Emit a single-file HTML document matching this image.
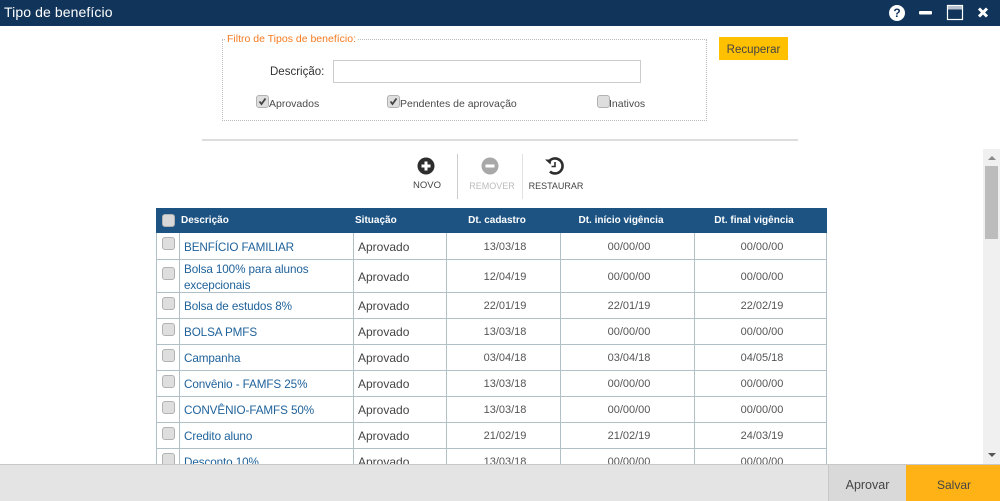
<!DOCTYPE html>
<html lang="pt"><head><meta charset="utf-8"><title>Tipo de benefício</title>
<style>
html,body{margin:0;padding:0}
body{width:1000px;height:501px;overflow:hidden;background:#fff;position:relative;font-family:"Liberation Sans",sans-serif;color:#333}
.a{position:absolute;white-space:nowrap;line-height:16px}
.b{position:absolute}
.cb{position:absolute;width:11px;height:11px;background:#dedede;border:1px solid #b2b2b2;border-radius:3px}
.cb svg{position:absolute;left:1px;top:1px}
.l{position:absolute;background:#b0c0c6}
.d{font-size:11.7px;letter-spacing:-.1px;color:#20639b;margin-top:1px}
.s{font-size:12px;color:#444}
.c{font-size:11px;color:#555;text-align:center;width:100px}
.h{font-size:10px;color:#fff;font-weight:bold}
.f{font-size:10.5px;color:#4a4a4a}
</style></head><body>
<div class="b" style="left:0;top:0;width:1000px;height:26px;background:#11355a"></div>
<div class="a" style="left:4px;top:4px;font-size:14px;color:#fff;letter-spacing:.1px">Tipo de benefício</div>
<svg class="b" style="left:888px;top:4px" width="104" height="18" viewBox="0 0 104 18">
<circle cx="9" cy="9" r="8" fill="#fff"/><text x="9" y="13" font-size="12" font-weight="bold" text-anchor="middle" fill="#11355a" font-family="Liberation Sans">?</text>
<rect x="31" y="7" width="13" height="3.500" rx="1" fill="#fff"/>
<rect x="59.500" y="1.500" width="15" height="14" fill="none" stroke="#fff" stroke-width="1.200"/><rect x="60" y="2" width="14" height="3.500" fill="#b9c4d0"/>
<path d="M91 4.500l8 8M99 4.500l-8 8" stroke="#fff" stroke-width="3"/>
</svg>

<div class="b" style="left:222px;top:39px;width:483px;height:80px;border:1px dotted #bbb"></div>
<div class="a" style="left:225px;top:31px;font-size:10.5px;color:#f47b20;background:#fff;padding:0 2px;">Filtro de Tipos de benefício:</div>
<div class="a" style="left:270px;top:64px;font-size:11.500px;color:#333">Descrição:</div>
<div class="b" style="left:333px;top:60px;width:306px;height:21px;border:1px solid #ccc"></div>
<div class="cb" style="left:256px;top:95px"><svg width="9" height="9" viewBox="0 0 9 9"><path d="M1.500 4.500l2 2.500 4-5.500" fill="none" stroke="#444" stroke-width="1.800"/></svg></div>
<div class="a f" style="left:269px;top:96px">Aprovados</div>
<div class="cb" style="left:387px;top:95px"><svg width="9" height="9" viewBox="0 0 9 9"><path d="M1.500 4.500l2 2.500 4-5.500" fill="none" stroke="#444" stroke-width="1.800"/></svg></div>
<div class="a f" style="left:400px;top:96px">Pendentes de aprovação</div>
<div class="cb" style="left:597px;top:95px"></div>
<div class="a f" style="left:609px;top:96px">Inativos</div>
<div class="b" style="left:719px;top:37px;width:69px;height:23px;background:#ffc000"></div>
<div class="a" style="left:719px;top:42px;width:69px;text-align:center;font-size:11.500px;color:#444">Recuperar</div>
<div class="b" style="left:202px;top:139px;width:596px;height:2px;background:#ddd"></div>

<svg class="b" style="left:416px;top:156px" width="20" height="20" viewBox="0 0 20 20"><circle cx="10" cy="10" r="8.500" fill="#2d2d2d"/><path d="M10 5.500v9M5.500 10h9" stroke="#fff" stroke-width="3"/></svg>
<svg class="b" style="left:480px;top:156px" width="20" height="20" viewBox="0 0 20 20"><circle cx="10" cy="10" r="8.500" fill="#a8a8a8"/><path d="M5.500 10h9" stroke="#fff" stroke-width="3"/></svg>
<svg class="b" style="left:544px;top:156px" width="22" height="20" viewBox="0 0 22 20"><path d="M5 5.500A7.500 7.500 0 1 1 6 15.500" fill="none" stroke="#2d2d2d" stroke-width="2.600"/><path d="M1 3.500l6.500 0-1 5z" fill="#2d2d2d"/><path d="M11 6v4.500H7.500" fill="none" stroke="#2d2d2d" stroke-width="1.600"/></svg>
<div class="a" style="left:397px;top:178px;width:60px;text-align:center;font-size:9.500px;color:#444">NOVO</div>
<div class="a" style="left:462px;top:178px;width:60px;text-align:center;font-size:9px;color:#bbb">REMOVER</div>
<div class="a" style="left:526px;top:178px;width:60px;text-align:center;font-size:9px;color:#444">RESTAURAR</div>
<div class="b" style="left:457px;top:154px;width:1px;height:45px;background:#ccc"></div>
<div class="b" style="left:522px;top:154px;width:1px;height:45px;background:#e2e2e2"></div>

<div class="b" style="left:156px;top:208px;width:671px;height:25px;background:#1c5383"></div>
<div class="cb" style="left:162px;top:214px;background:#d8d8d8"></div>
<div class="a h" style="left:181px;top:213px">Descrição</div>
<div class="a h" style="left:355px;top:213px">Situação</div>
<div class="a h" style="left:447px;top:213px;width:100px;text-align:center">Dt. cadastro</div>
<div class="a h" style="left:571px;top:213px;width:100px;text-align:center">Dt. início vigência</div>
<div class="a h" style="left:704px;top:213px;width:100px;text-align:center">Dt. final vigência</div>

<div class="l" style="left:156px;top:233px;width:1px;height:232px"></div>
<div class="l" style="left:179px;top:233px;width:1px;height:232px"></div>
<div class="l" style="left:353px;top:233px;width:1px;height:232px"></div>
<div class="l" style="left:446px;top:233px;width:1px;height:232px"></div>
<div class="l" style="left:560px;top:233px;width:1px;height:232px"></div>
<div class="l" style="left:694px;top:233px;width:1px;height:232px"></div>
<div class="l" style="left:826px;top:233px;width:1px;height:232px"></div>
<div class="l" style="left:156px;top:259px;width:671px;height:1px"></div>
<div class="l" style="left:156px;top:292px;width:671px;height:1px"></div>
<div class="l" style="left:156px;top:318px;width:671px;height:1px"></div>
<div class="l" style="left:156px;top:344px;width:671px;height:1px"></div>
<div class="l" style="left:156px;top:370px;width:671px;height:1px"></div>
<div class="l" style="left:156px;top:396px;width:671px;height:1px"></div>
<div class="l" style="left:156px;top:422px;width:671px;height:1px"></div>
<div class="l" style="left:156px;top:448px;width:671px;height:1px"></div>

<div class="cb" style="left:162px;top:237px"></div><div class="a d" style="left:184px;top:239px">BENFÍCIO FAMILIAR</div><div class="a s" style="left:358px;top:239px">Aprovado</div><div class="a c" style="left:455px;top:239px">13/03/18</div><div class="a c" style="left:579px;top:239px">00/00/00</div><div class="a c" style="left:712px;top:239px">00/00/00</div>
<div class="cb" style="left:162px;top:267px"></div><div class="a d" style="left:184px;top:261px">Bolsa 100% para alunos</div><div class="a d" style="left:184px;top:277px">excepcionais</div><div class="a s" style="left:358px;top:269px">Aprovado</div><div class="a c" style="left:455px;top:269px">12/04/19</div><div class="a c" style="left:579px;top:269px">00/00/00</div><div class="a c" style="left:712px;top:269px">00/00/00</div>
<div class="cb" style="left:162px;top:297px"></div><div class="a d" style="left:184px;top:298px">Bolsa de estudos 8%</div><div class="a s" style="left:358px;top:298px">Aprovado</div><div class="a c" style="left:455px;top:298px">22/01/19</div><div class="a c" style="left:579px;top:298px">22/01/19</div><div class="a c" style="left:712px;top:298px">22/02/19</div>
<div class="cb" style="left:162px;top:323px"></div><div class="a d" style="left:184px;top:324px">BOLSA PMFS</div><div class="a s" style="left:358px;top:324px">Aprovado</div><div class="a c" style="left:455px;top:324px">13/03/18</div><div class="a c" style="left:579px;top:324px">00/00/00</div><div class="a c" style="left:712px;top:324px">00/00/00</div>
<div class="cb" style="left:162px;top:349px"></div><div class="a d" style="left:184px;top:350px">Campanha</div><div class="a s" style="left:358px;top:350px">Aprovado</div><div class="a c" style="left:455px;top:350px">03/04/18</div><div class="a c" style="left:579px;top:350px">03/04/18</div><div class="a c" style="left:712px;top:350px">04/05/18</div>
<div class="cb" style="left:162px;top:375px"></div><div class="a d" style="left:184px;top:376px">Convênio - FAMFS 25%</div><div class="a s" style="left:358px;top:376px">Aprovado</div><div class="a c" style="left:455px;top:376px">13/03/18</div><div class="a c" style="left:579px;top:376px">00/00/00</div><div class="a c" style="left:712px;top:376px">00/00/00</div>
<div class="cb" style="left:162px;top:401px"></div><div class="a d" style="left:184px;top:402px">CONVÊNIO-FAMFS 50%</div><div class="a s" style="left:358px;top:402px">Aprovado</div><div class="a c" style="left:455px;top:402px">13/03/18</div><div class="a c" style="left:579px;top:402px">00/00/00</div><div class="a c" style="left:712px;top:402px">00/00/00</div>
<div class="cb" style="left:162px;top:427px"></div><div class="a d" style="left:184px;top:428px">Credito aluno</div><div class="a s" style="left:358px;top:428px">Aprovado</div><div class="a c" style="left:455px;top:428px">21/02/19</div><div class="a c" style="left:579px;top:428px">21/02/19</div><div class="a c" style="left:712px;top:428px">24/03/19</div>
<div class="cb" style="left:162px;top:453px"></div><div class="a d" style="left:184px;top:454px">Desconto 10%</div><div class="a s" style="left:358px;top:454px">Aprovado</div><div class="a c" style="left:455px;top:454px">13/03/18</div><div class="a c" style="left:579px;top:454px">00/00/00</div><div class="a c" style="left:712px;top:454px">00/00/00</div>

<div class="b" style="left:983px;top:149px;width:17px;height:315px;background:#f0f0f0"></div>
<div class="b" style="left:985px;top:166px;width:13px;height:73px;background:#bcbcbc"></div>
<div class="b" style="left:988px;top:156px;width:0;height:0;border-left:4px solid transparent;border-right:4px solid transparent;border-bottom:4px solid #8a8a8a"></div>
<div class="b" style="left:988px;top:453px;width:0;height:0;border-left:4px solid transparent;border-right:4px solid transparent;border-top:4px solid #555"></div>

<div class="b" style="left:0;top:465px;width:1000px;height:36px;background:#e4e4e4;box-shadow:0 -1px 0 #c8c8c8"></div>
<div class="b" style="left:828px;top:465px;width:77px;height:36px;background:#d9d9d9;border-left:1px solid #c8c8c8"></div>
<div class="b" style="left:906px;top:465px;width:94px;height:36px;background:#ffb216"></div>
<div class="a" style="left:829px;top:477px;width:77px;text-align:center;font-size:12.500px;color:#444">Aprovar</div>
<div class="a" style="left:907px;top:477px;width:94px;text-align:center;font-size:12px;color:#444">Salvar</div>
</body></html>
